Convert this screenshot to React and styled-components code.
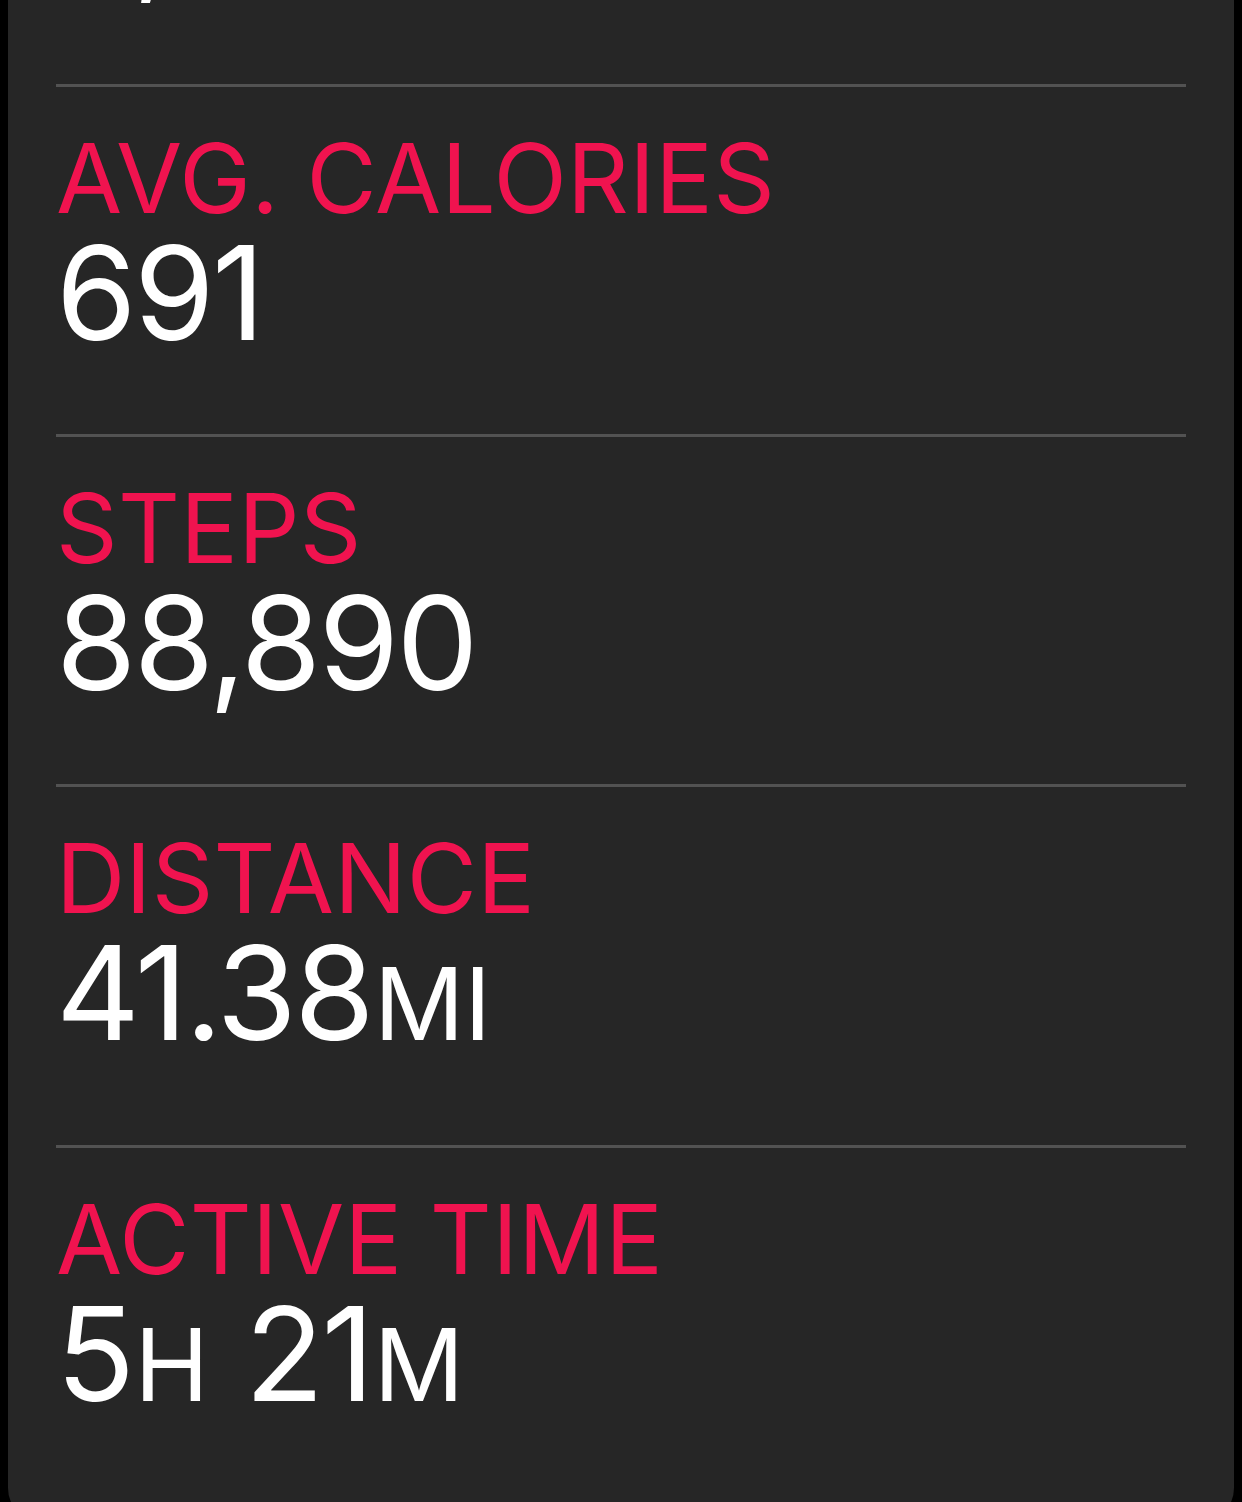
import React from "react";
import styled, { createGlobalStyle } from "styled-components";

const GlobalStyle = createGlobalStyle`
  html, body {
    margin: 0;
    padding: 0;
    background: #000;
  }
  body {
    font-family: Inter, "Noto Sans", "Liberation Sans", sans-serif;
    -webkit-font-smoothing: antialiased;
  }
`;

const Viewport = styled.div`
  height: 1502px;
  overflow: hidden;
  background: #000;
`;

/* Scrolled summary list: the previous entry sits above the fold */
const Card = styled.div`
  margin: -276px 8px 0;
  padding: 0 48px 16px;
  background: #262626;
  border-radius: 0 0 34px 34px;
`;

const Section = styled.section`
  border-top: 3px solid #525252;
  padding: 43px 0 ${(p) => (p.$lead ? "86px" : "76px")};
  display: flex;
  flex-direction: column;
  gap: 2px;
`;

const Label = styled.div`
  font-size: 96px;
  line-height: 96px;
  font-weight: 400;
  letter-spacing: 0.3px;
  color: #f0134f;
  text-transform: uppercase;
  white-space: nowrap;
`;

const Value = styled.div`
  font-size: 130px;
  line-height: 130px;
  font-weight: 400;
  letter-spacing: -2.6px;
  color: #fff;
  white-space: nowrap;
`;

const Unit = styled.span`
  font-size: 100px;
  letter-spacing: 0;
  margin-left: 2px;
  margin-right: ${(p) => (p.$trail ? "36px" : "0")};
`;

const stats = [
  { label: "Total Calories", value: [["4,838"]], lead: true },
  { label: "Avg. Calories", value: [["691"]] },
  { label: "Steps", value: [["88,890"]] },
  { label: "Distance", value: [["41.38", "MI"]] },
  { label: "Active Time", value: [["5", "H", true], ["21", "M"]] },
];

export default function App() {
  return (
    <>
      <GlobalStyle />
      <Viewport>
        <Card>
          {stats.map((s) => (
            <Section key={s.label} $lead={s.lead}>
              <Label>{s.label}</Label>
              <Value>
                {s.value.map(([num, unit, trail], i) => (
                  <React.Fragment key={i}>
                    {num}
                    {unit && <Unit $trail={trail}>{unit}</Unit>}
                  </React.Fragment>
                ))}
              </Value>
            </Section>
          ))}
        </Card>
      </Viewport>
    </>
  );
}
